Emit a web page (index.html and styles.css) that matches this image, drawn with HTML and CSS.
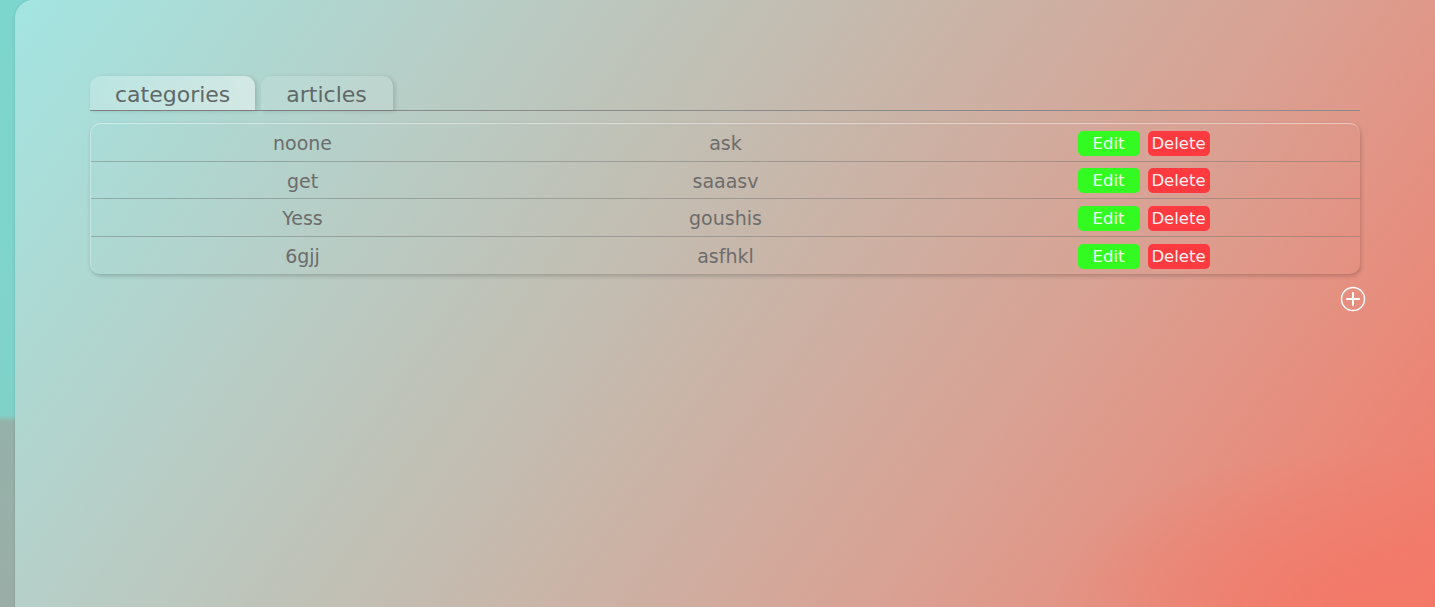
FILE: index.html
```html
<!DOCTYPE html>
<html>
<head>
<meta charset="utf-8">
<link rel="stylesheet" href="styles.css">
</head>
<body>
<div class="card">
  <div class="tabs">
    <div class="tab active">categories</div>
    <div class="tab">articles</div>
  </div>
  <div class="table">
    <div class="row">
      <div class="cell">noone</div>
      <div class="cell">ask</div>
      <div class="cell actions"><button class="btn edit">Edit</button><button class="btn del">Delete</button></div>
    </div>
    <div class="row">
      <div class="cell">get</div>
      <div class="cell">saaasv</div>
      <div class="cell actions"><button class="btn edit">Edit</button><button class="btn del">Delete</button></div>
    </div>
    <div class="row">
      <div class="cell">Yess</div>
      <div class="cell">goushis</div>
      <div class="cell actions"><button class="btn edit">Edit</button><button class="btn del">Delete</button></div>
    </div>
    <div class="row">
      <div class="cell">6gjj</div>
      <div class="cell">asfhkl</div>
      <div class="cell actions"><button class="btn edit">Edit</button><button class="btn del">Delete</button></div>
    </div>
  </div>
  <div class="addbar">
    <svg class="add" width="26" height="26" viewBox="0 0 26 26">
      <circle cx="13" cy="13" r="11.5" fill="none" stroke="#fff" stroke-width="1.4"/>
      <path d="M13 7v12M7 13h12" stroke="#fff" stroke-width="2" stroke-linecap="round"/>
    </svg>
  </div>
</div>
</body>
</html>
```
FILE: styles.css
```css
html, body {
  margin: 0;
  padding: 0;
  height: 100%;
  overflow: hidden;
}
body {
  background: linear-gradient(to bottom, #7dd6cd 0, #80d2c9 415px, #95b1a9 422px, #9aaea7 100%);
  font-family: "DejaVu Sans", Verdana, sans-serif;
}
.card {
  margin-left: 15px;
  height: 607px;
  border-top-left-radius: 18px;
  background:
    radial-gradient(ellipse 300px 150px at 1340px 600px, rgba(244,118,102,0.75), rgba(244,118,102,0) 100%),
    linear-gradient(125deg, #a3e5e2 0%, #b9cbc3 28%, #c8b6a9 50%, #d9a193 70%, #e98a7a 88%, #f27a6a 100%);
  padding: 76px 75px 0 75px;
  box-sizing: border-box;
  box-shadow: -1px 0 2px rgba(0,0,0,0.08);
}
.tabs {
  display: flex;
  gap: 6px;
  border-bottom: 1px solid #8a8a8a;
  width: 1270px;
}
.tab {
  font-size: 22px;
  line-height: 26px;
  color: #606868;
  padding: 6px 26px 2px 25px;
  border-radius: 10px 10px 0 0;
  background: rgba(255,255,255,0.12);
  box-shadow: 2px 1px 4px rgba(0,0,0,0.15);
}
.tab.active {
  padding-right: 25px;
  background: linear-gradient(to right, rgba(255,255,255,0.2), rgba(255,255,255,0.45));
}
.table {
  margin-top: 12px;
  width: 1270px;
  box-sizing: border-box;
  border-radius: 10px;
  border-top: 1px solid rgba(255,255,255,0.45);
  border-left: 1px solid rgba(255,255,255,0.3);
  box-shadow: 1px 2px 4px rgba(0,0,0,0.2);
}
.row {
  display: grid;
  grid-template-columns: 1fr 1fr 1fr;
  height: 37.5px;
  align-items: center;
  border-bottom: 1px solid rgba(110,110,110,0.45);
  box-sizing: border-box;
  padding-top: 2px;
}
.row:last-child {
  border-bottom: none;
}
.cell {
  text-align: center;
  font-size: 19px;
  color: #6c6c6c;
}
.actions {
  display: flex;
  justify-content: center;
  gap: 8px;
  padding-right: 10px;
}
.btn {
  width: 62px;
  height: 25px;
  border: none;
  border-radius: 5px;
  font-family: "DejaVu Sans", Verdana, sans-serif;
  font-size: 16.5px;
  padding: 0;
  color: #f0fff0;
  line-height: 25px;
}
.btn.edit {
  background: #33fb22;
}
.btn.del {
  background: #fc3a3f;
  color: #fff0f0;
}
.addbar {
  width: 1276px;
  display: flex;
  justify-content: flex-end;
  margin-top: 12px;
}
.add {
  display: block;
}
```
